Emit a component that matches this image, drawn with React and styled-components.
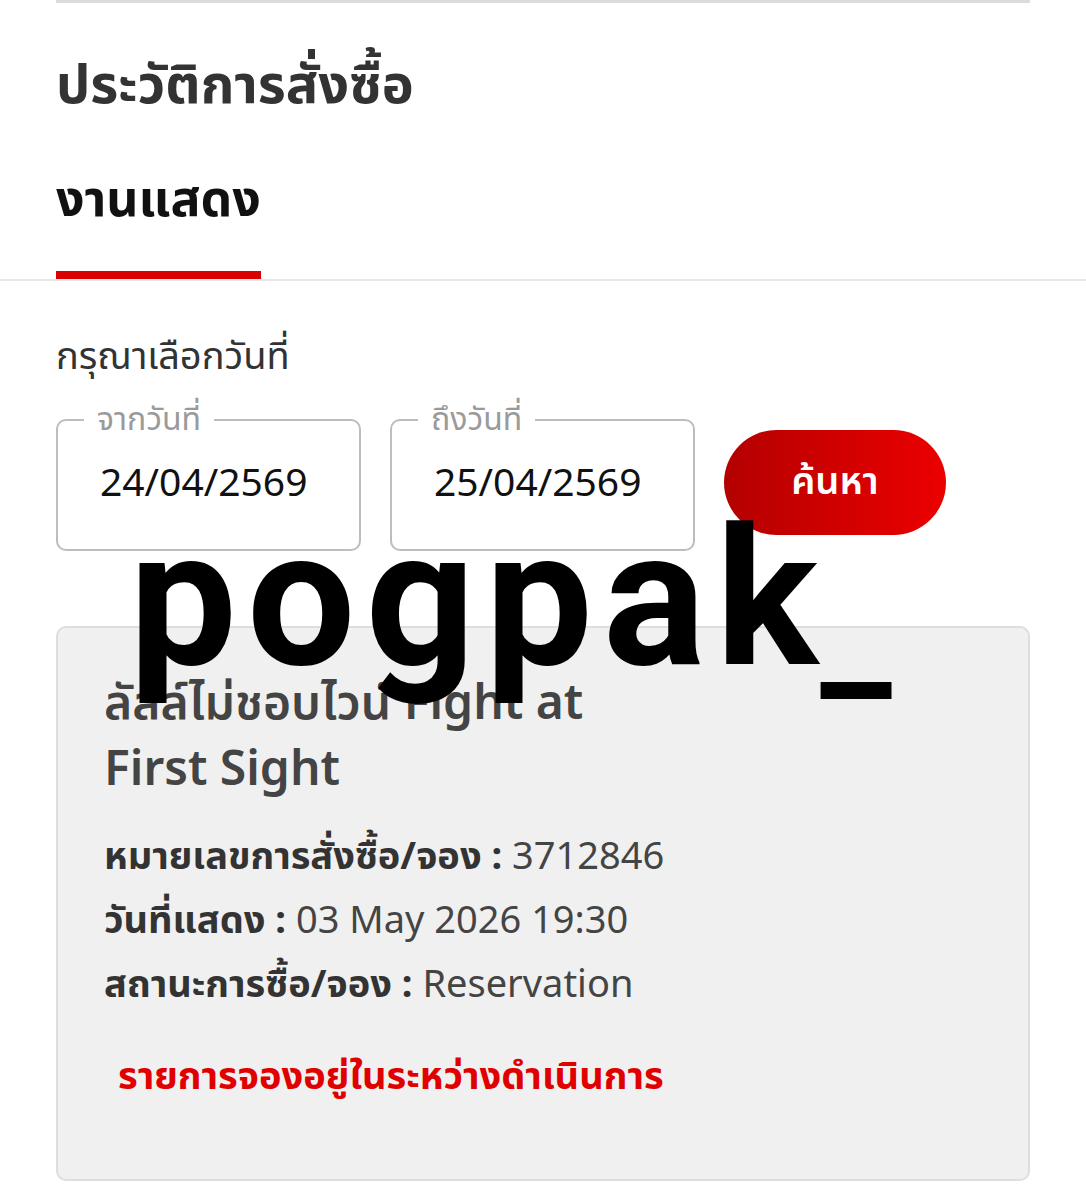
import React from "react";
import styled, { createGlobalStyle } from "styled-components";

const Global = createGlobalStyle`
  html, body { margin: 0; padding: 0; background: #fff; }
  body { font-family: "Noto Sans", "Noto Sans Thai", "Open Sans", sans-serif; }
  * { box-sizing: border-box; }
`;

const Page = styled.div`
  position: relative;
  width: 1086px;
  min-height: 1200px;
  overflow: hidden;
`;

const Inner = styled.div`
  padding: 0 56px;
`;

const TopRule = styled.div`
  height: 3px;
  background: #dcdcdc;
`;

const Heading = styled.h1`
  margin: 47px 0 0;
  font-size: 54px;
  font-weight: 700;
  color: #333;
  line-height: 64px;
`;

const Tabs = styled.div`
  display: flex;
  border-bottom: 2px solid #e8e8e8;
  padding: 0 56px;
`;

const Tab = styled.div`
  margin-top: 51px;
  font-size: 50px;
  font-weight: 700;
  color: #111;
  line-height: 64px;
  padding-bottom: 42px;
  border-bottom: 8px solid ${(p) => (p.$active ? "#d90000" : "transparent")};
`;

const Label = styled.div`
  margin-top: 49px;
  font-size: 38px;
  color: #333;
  line-height: 48px;
`;

const Filters = styled.div`
  display: flex;
  align-items: flex-start;
  gap: 29px;
  margin-top: 41px;
`;

const Field = styled.div`
  position: relative;
  width: 305px;
  height: 132px;
  border: 2px solid #bdbdbd;
  border-radius: 10px;
  padding-left: 42px;
  display: flex;
  align-items: center;
`;

const Legend = styled.span`
  position: absolute;
  left: 26px;
  top: -23px;
  padding: 0 13px;
  background: #fff;
  font-size: 32px;
  line-height: 40px;
  color: #9a9a9a;
`;

const Value = styled.div`
  font-size: 39px;
  line-height: 48px;
  color: #111;
  margin-top: -8px;
`;

const SearchButton = styled.button`
  width: 222px;
  height: 105px;
  margin-top: 11px;
  border: none;
  border-radius: 53px;
  background: linear-gradient(90deg, #b40000 0%, #ec0000 100%);
  color: #fff;
  font-family: inherit;
  font-size: 38px;
  font-weight: 600;
  line-height: 48px;
  padding: 0 0 8px;
`;

const Card = styled.div`
  margin-top: 75px;
  background: #f0f0f0;
  border: 2px solid #dedede;
  border-radius: 10px;
  padding: 40px 46px 0;
  height: 555px;
`;

const Title = styled.div`
  max-width: 540px;
  font-size: 48px;
  font-weight: 600;
  color: #444;
  line-height: 66px;
`;

const Info = styled.div`
  margin-top: 22px;
`;

const Row = styled.div`
  font-size: 38px;
  line-height: 64px;
  color: #444;
`;

const Key = styled.span`
  font-weight: 700;
  color: #333;
`;

const Status = styled.div`
  margin-top: 32px;
  padding-left: 14px;
  font-size: 38px;
  font-weight: 700;
  color: #e00000;
  line-height: 56px;
`;

const Watermark = styled.div`
  position: absolute;
  left: 129px;
  top: 503px;
  font-family: "Roboto", "Liberation Sans", sans-serif;
  font-size: 192px;
  font-weight: 700;
  color: #000;
  letter-spacing: 10px;
  line-height: 1;
  white-space: nowrap;
  pointer-events: none;
`;

const Underscore = styled.span`
  position: relative;
  top: 18px;
  margin-left: -8px;
  font-size: 160px;
  letter-spacing: 0;
`;

export default function App() {
  return (
    <Page>
      <Global />
      <Inner>
        <TopRule />
        <Heading>ประวัติการสั่งซื้อ</Heading>
      </Inner>
      <Tabs>
        <Tab $active>งานแสดง</Tab>
      </Tabs>
      <Inner>
        <Label>กรุณาเลือกวันที่</Label>
        <Filters>
          <Field>
            <Legend>จากวันที่</Legend>
            <Value>24/04/2569</Value>
          </Field>
          <Field>
            <Legend>ถึงวันที่</Legend>
            <Value>25/04/2569</Value>
          </Field>
          <SearchButton>ค้นหา</SearchButton>
        </Filters>
        <Card>
          <Title>ลัลล์ไม่ชอบไวน์ Fight at First Sight</Title>
          <Info>
            <Row>
              <Key>หมายเลขการสั่งซื้อ/จอง : </Key>3712846
            </Row>
            <Row>
              <Key>วันที่แสดง : </Key>03 May 2026 19:30
            </Row>
            <Row>
              <Key>สถานะการซื้อ/จอง : </Key>Reservation
            </Row>
          </Info>
          <Status>รายการจองอยู่ในระหว่างดำเนินการ</Status>
        </Card>
      </Inner>
      <Watermark>
        pogpak<Underscore>_</Underscore>
      </Watermark>
    </Page>
  );
}
